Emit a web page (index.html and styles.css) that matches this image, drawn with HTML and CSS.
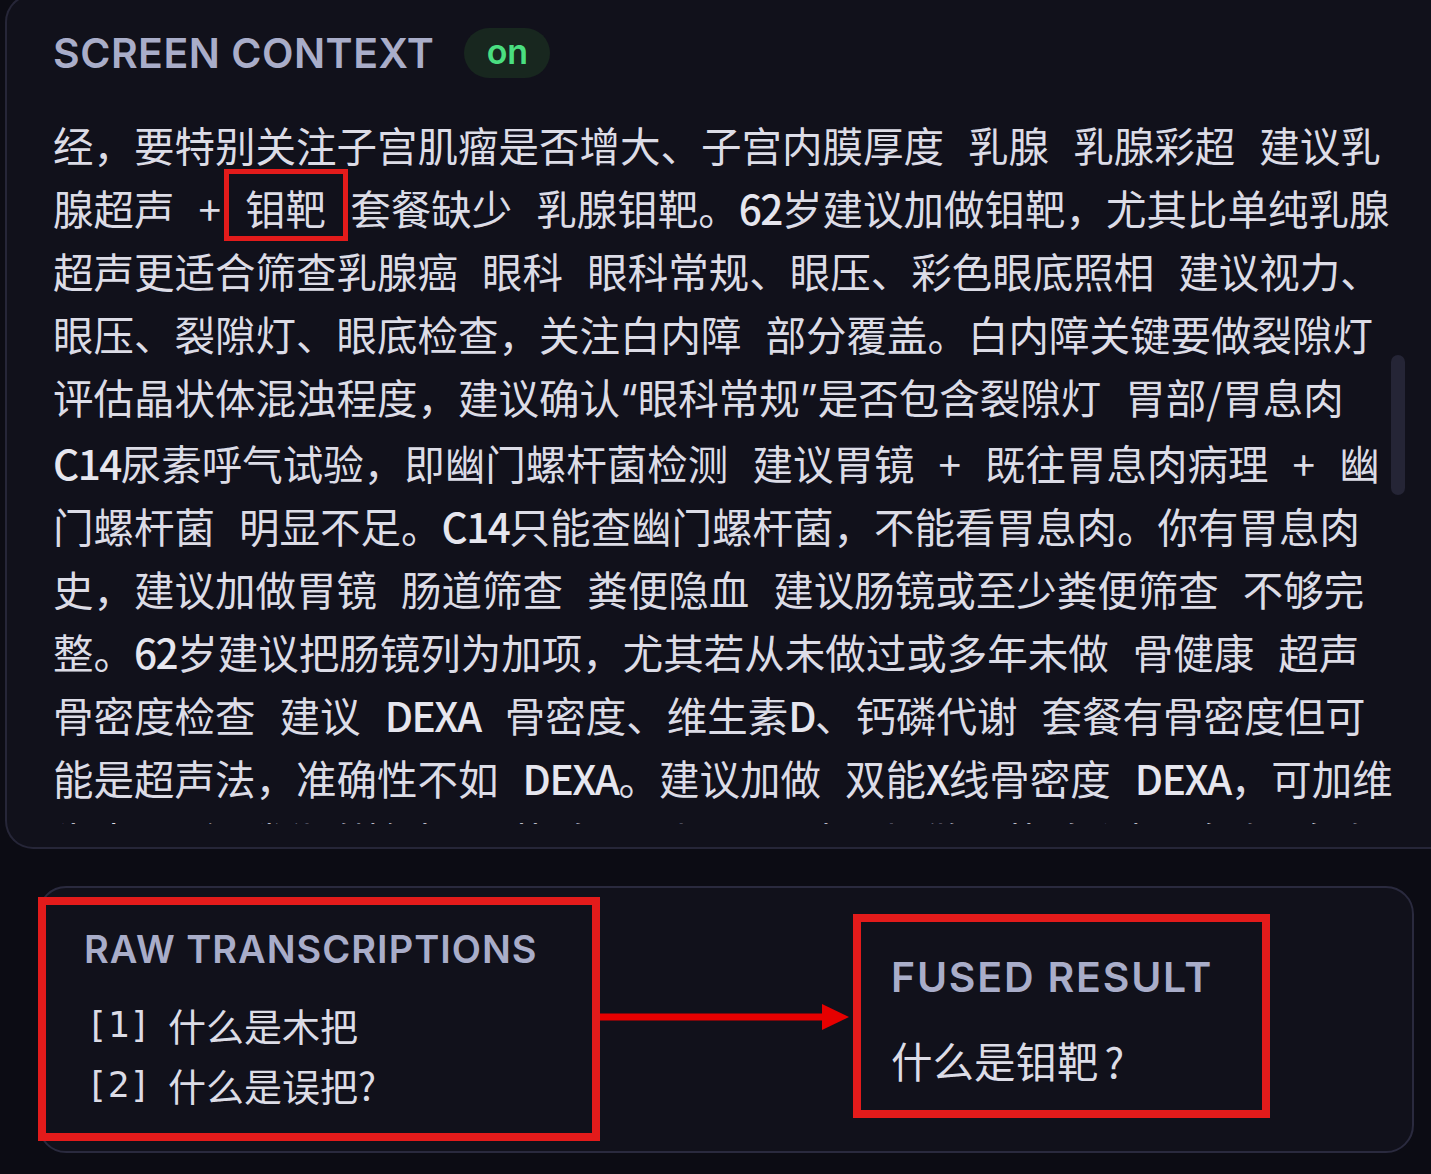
FILE: index.html
```html
<!DOCTYPE html>
<html lang="zh-CN">
<head>
<meta charset="utf-8">
<title>Screen context</title>
<link rel="stylesheet" href="styles.css">
</head>
<body>
<section class="context">
  <header class="context-head">
    <h2 class="label label-lg">SCREEN CONTEXT</h2>
    <span class="badge">on</span>
  </header>
  <div class="context-text">
    <p class="ctx">经，要特别关注子宫肌瘤是否增大、子宫内膜厚度 乳腺 乳腺彩超 建议乳<br>腺超声 + <span class="hl">钼靶</span> 套餐缺少 乳腺钼靶。<span class="lat">62</span>岁建议加做钼靶，尤其比单纯乳腺<br>超声更适合筛查乳腺癌 眼科 眼科常规、眼压、彩色眼底照相 建议视力、<br>眼压、裂隙灯、眼底检查，关注白内障 部分覆盖。白内障关键要做裂隙灯<br>评估晶状体混浊程度，建议确认<span class="q">“</span>眼科常规<span class="q">”</span>是否包含裂隙灯 胃部/胃息肉<br><span class="lat">C14</span>尿素呼气试验，即幽门螺杆菌检测 建议胃镜 + 既往胃息肉病理 + 幽<br>门螺杆菌 明显不足。<span class="lat">C14</span>只能查幽门螺杆菌，不能看胃息肉。你有胃息肉<br>史，建议加做胃镜 肠道筛查 粪便隐血 建议肠镜或至少粪便筛查 不够完<br>整。<span class="lat">62</span>岁建议把肠镜列为加项，尤其若从未做过或多年未做 骨健康 超声<br>骨密度检查 建议 <span class="lat">DEXA</span> 骨密度、维生素<span class="lat">D</span>、钙磷代谢 套餐有骨密度但可<br>能是超声法，准确性不如 <span class="lat">DEXA</span>。建议加做 双能<span class="lat">X</span>线骨密度 <span class="lat">DEXA</span>，可加维<br>生素D、钙磷代谢检查 甲状腺 甲功三项 建议加做甲状腺彩超 血脂 血脂</p>
  </div>
  <div class="scrollbar"></div>
</section>

<section class="fusion">
  <div class="box raw">
    <h3 class="label label-md">RAW TRANSCRIPTIONS</h3>
    <ul class="list">
      <li><span class="idx">[1]</span>什么是木把</li>
      <li><span class="idx">[2]</span>什么是误把?</li>
    </ul>
  </div>
  <svg class="arrow" width="253" height="30" viewBox="0 0 253 30" aria-hidden="true">
    <line x1="0" y1="15" x2="226" y2="15" stroke="#e60000" stroke-width="7"/>
    <polygon points="222,2 249,15 222,28" fill="#e60000"/>
  </svg>
  <div class="box fused">
    <h3 class="label label-lg label-wide">FUSED RESULT</h3>
    <p class="result">什么是钼靶<span class="qm">?</span></p>
  </div>
</section>
</body>
</html>
```
FILE: styles.css
```css
* { box-sizing: border-box; }

html {
  margin: 0;
  padding: 0;
  overflow: hidden;
  background: #0c0c14;
}

body {
  margin: 0;
  padding: 0;
  width: 1431px;
  height: 1174px;
  overflow: hidden;
  background: #0c0c14;
  font-family: "Noto Sans CJK SC", "Noto Sans", sans-serif;
}

.context {
  position: relative;
  margin: -6px 0 0 5px;
  height: 855px;
  background: #11111b;
  border: 2px solid #262638;
  border-right: 0;
  border-radius: 28px 0 0 28px;
  padding: 32px 0 0 46px;
}

.context-head {
  display: flex;
  align-items: center;
  gap: 30px;
  height: 50px;
}

.label {
  margin: 0;
  font-family: Inter, "Noto Sans", sans-serif;
  font-weight: 600;
  color: #a9adc9;
  line-height: 1;
  letter-spacing: 1px;
  white-space: nowrap;
}

.label-lg { font-size: 41px; letter-spacing: 0.5px; }
.label-md { font-size: 38px; }
.label-wide { letter-spacing: 1.8px; }

.badge {
  display: inline-flex;
  align-items: center;
  justify-content: center;
  width: 86px;
  height: 50px;
  border-radius: 25px;
  background: #18271f;
  color: #4ade80;
  font-family: Inter, sans-serif;
  font-weight: 600;
  font-size: 34px;
  line-height: 1;
  padding-bottom: 2px;
}

.context-text {
  margin-top: 35px;
  height: 711px;
  overflow: hidden;
}

.ctx {
  margin: 0;
  font-size: 40.5px;
  line-height: 63px;
  color: #dcdce6;
  white-space: nowrap;
  word-spacing: 15px;
}

.lat {
  font-weight: 500;
  letter-spacing: -1.5px;
  color: #e6e6ee;
}

.q {
  font-family: Inter, sans-serif;
}

.hl {
  position: relative;
}

.hl::after {
  content: "";
  position: absolute;
  left: -21px;
  right: -22px;
  top: -9px;
  bottom: -4px;
  border: 5px solid #e31b1b;
}

.scrollbar {
  position: absolute;
  left: 1384px;
  top: 359px;
  width: 14px;
  height: 140px;
  border-radius: 7px;
  background: #252536;
}

.fusion {
  display: flex;
  align-items: flex-start;
  margin: 37px 0 0 38px;
  width: 1376px;
  height: 267px;
  background: #11111b;
  border: 2px solid #2a2a3e;
  border-radius: 28px;
}

.box {
  position: relative;
  border: 8px solid #e31b1b;
  background: #11111b;
}

.raw {
  width: 562px;
  margin: 9px 0 0 -2px;
  padding: 25px 0 18px 38px;
}

.list {
  list-style: none;
  margin: 27px 0 0;
  padding: 0;
  font-size: 38px;
  color: #dcdce6;
  white-space: nowrap;
}

.list li {
  display: flex;
  align-items: center;
  height: 60px;
  line-height: 60px;
}

.idx {
  display: inline-block;
  width: 84px;
  padding-left: 2px;
  font-family: "DejaVu Sans Mono", monospace;
  font-size: 36px;
  line-height: 1;
}

.arrow {
  flex: none;
  margin-top: 114px;
}

.fused {
  width: 417px;
  margin-top: 26px;
  padding: 35px 0 20px 30px;
}

.fused::before {
  content: "";
  position: absolute;
  left: -12px;
  right: -6px;
  top: -12px;
  height: 20px;
  border-top: 3px solid #2a2a3e;
  border-left: 3px solid #2a2a3e;
  border-radius: 14px 0 0 0;
  z-index: -1;
}

.result {
  margin: 32px 0 0;
  font-size: 41.5px;
  line-height: 60px;
  color: #dcdce6;
  white-space: nowrap;
}

.qm {
  margin-left: 6px;
}
```
